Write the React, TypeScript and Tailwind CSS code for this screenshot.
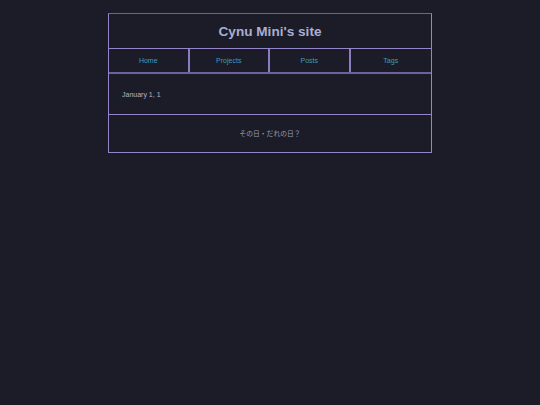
export default function App() {
  const links = ['Home', 'Projects', 'Posts', 'Tags'];
  return (
    <div className="min-h-[405px] w-full bg-[#1c1c28] pt-[13px] font-['Liberation_Sans',Arial,sans-serif]">
      <div className="mx-auto w-[324px] border border-[#9486c8] border-t-[#6f609e]">
        <header className="flex h-[34px] items-center justify-center pt-[2px]">
          <h1 className="text-[13.6px] font-bold text-[#a9aed0]">Cynu Mini's site</h1>
        </header>
        <nav className="grid grid-cols-4 border-t border-b-2 border-t-[#9486c8] border-b-[#6f609e]">
          {links.map((l, i) => (
            <a
              key={l}
              className={`flex h-[23px] items-center justify-center pt-[2px] text-[7px] text-[#3a9fb6] ${
                i < 3 ? 'border-r-2 border-[#8a7cbd]' : ''
              }`}
            >
              {l}
            </a>
          ))}
        </nav>
        <main className="flex h-[40px] items-center px-[13px] pt-[3px]">
          <p className="text-[7px] text-[#b3b6c8]">January 1, 1</p>
        </main>
        <footer className="flex h-[38px] items-center justify-center border-t border-[#9486c8]">
          <p className="font-['Noto_Sans_CJK_JP',sans-serif] text-[6.8px] text-[#9a9eb4]">その日・だれの日？</p>
        </footer>
      </div>
    </div>
  );
}
